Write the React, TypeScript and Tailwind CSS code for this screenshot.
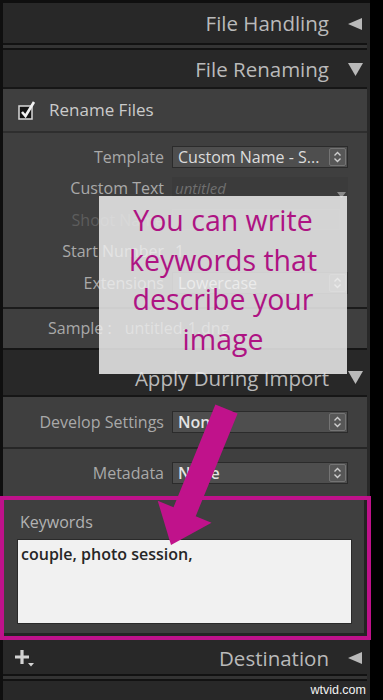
const TriLeft = () => (
  <svg width="15" height="12" viewBox="0 0 15 12" className="ml-[19px]">
    <polygon points="14,0 14,12 0,6" fill="#b9b9b9" />
  </svg>
);

const TriDown = () => (
  <svg width="15" height="13" viewBox="0 0 15 13" className="ml-[19px]">
    <polygon points="0,0 15,0 7.5,13" fill="#b9b9b9" />
  </svg>
);

const Stepper = () => (
  <div className="mr-[1px] flex h-[18px] w-[17px] items-center justify-center rounded-[2px] border border-[#747474] bg-[#575757]">
    <svg width="9" height="12" viewBox="0 0 9 12">
      <polyline points="1.5,4.5 4.5,1.5 7.5,4.5" fill="none" stroke="#cfcfcf" strokeWidth="1.4" />
      <polyline points="1.5,7.5 4.5,10.5 7.5,7.5" fill="none" stroke="#cfcfcf" strokeWidth="1.4" />
    </svg>
  </div>
);

const Select = ({ value, bold }: { value: string; bold?: boolean }) => (
  <div className="flex h-[22px] w-[176px] items-center border border-[#2b2b2b] bg-[#4e4e4e]">
    <span
      className={
        bold
          ? "flex-1 truncate pl-[5px] text-[16px] font-semibold leading-[20px] text-[#e4e4e4]"
          : "flex-1 truncate pl-[5px] text-[16px] leading-[20px] text-[#dcdcdc]"
      }
    >
      {value}
    </span>
    <Stepper />
  </div>
);

const Row = ({ label, children, faded }: { label: string; children?: any; faded?: boolean }) => (
  <div className="flex h-[31.5px] items-center">
    <div
      className={
        faded
          ? "w-[161px] text-right text-[16px] text-[#5d5d5d]"
          : "w-[161px] text-right text-[16px] text-[#a9a9a9]"
      }
    >
      {label}
    </div>
    <div className="ml-[8px] flex items-center">{children}</div>
  </div>
);

const DoubleLine = () => (
  <div className="mr-[3px] h-[7px] border-y-2 border-[#121212] bg-[#343434]" />
);

const App = () => {
  return (
    <div
      className="relative flex h-[700px] w-[383px] overflow-hidden bg-black"
      style={{ fontFamily: '"Open Sans", "Liberation Sans", sans-serif' }}
    >
      <div className="flex h-full w-[370px] flex-col border-l-[3px] border-t-[3px] border-[#0f0f0f] bg-[#282828]">
        {/* File Handling */}
        <div className="flex h-[40px] items-center justify-end pr-[7px] pt-[2px]">
          <span className="text-[20.5px] text-[#bababa]">File Handling</span>
          <TriLeft />
        </div>
        <DoubleLine />

        {/* File Renaming */}
        <div className="flex h-[38px] items-center justify-end pr-[7px] pt-[3px]">
          <span className="text-[20.5px] text-[#bababa]">File Renaming</span>
          <TriDown />
        </div>

        <div className="mr-[3px] flex flex-col border-y-2 border-[#161616] bg-[#3f3f3f]">
          <div className="flex h-[44px] items-center border-b-2 border-[#2e2e2e] pl-[14px]">
            <svg width="22" height="22" viewBox="0 0 22 22">
              <rect x="2" y="7" width="13" height="13" fill="#141414" stroke="#d8d8d8" strokeWidth="1.5" />
              <polyline points="5,13 8.5,17 17,3" fill="none" stroke="#f2f2f2" strokeWidth="2.6" />
            </svg>
            <span className="ml-[10px] text-[17px] text-[#cbcbcb]">Rename Files</span>
          </div>

          <div className="flex flex-col pb-[8px] pt-[8px]">
            <Row label="Template">
              <Select value="Custom Name - S..." />
            </Row>
            <Row label="Custom Text">
              <div className="relative flex h-[22px] w-[176px] items-center bg-[#3b3b3b]">
                <span className="pl-[3px] text-[15px] italic text-[#6f6f6f]">untitled</span>
                <svg width="9" height="6" viewBox="0 0 9 6" className="absolute right-[2px] top-[15px]">
                  <polygon points="0,0 9,0 4.5,6" fill="#8a8a8a" />
                </svg>
              </div>
            </Row>
            <Row label="Shoot Name" faded>
              <div className="h-[21px] w-[168px] border border-[#4d4d4d] bg-[#424242]" />
            </Row>
            <Row label="Start Number">
              <span className="pl-[3px] text-[16px] text-[#a9a9a9]">1</span>
            </Row>
            <Row label="Extensions">
              <Select value="Lowercase" />
            </Row>
          </div>

          <div className="flex h-[41px] items-center border-t-2 border-[#1b1b1b] pl-[45px]">
            <span className="text-[16px] text-[#a9a9a9]">Sample :</span>
            <span className="ml-[13px] text-[16px] text-[#9a9a9a]">untitled-1.dng</span>
          </div>
        </div>

        {/* Apply During Import */}
        <div className="flex h-[46px] items-center justify-end pr-[7px] pt-[11px]">
          <span className="text-[20.5px] text-[#bababa]">Apply During Import</span>
          <TriDown />
        </div>

        <div className="mr-[3px] flex flex-col border-t-2 border-[#161616] bg-[#3f3f3f]">
          <div className="border-b-2 border-[#262626]">
            <div className="flex h-[50px] items-center">
              <div className="w-[161px] text-right text-[16px] text-[#a9a9a9]">Develop Settings</div>
              <div className="ml-[8px]">
                <Select value="None" bold />
              </div>
            </div>
          </div>
          <div className="flex h-[47px] items-center">
            <div className="w-[161px] text-right text-[16px] text-[#a9a9a9]">Metadata</div>
            <div className="ml-[8px]">
              <Select value="None" bold />
            </div>
          </div>
        </div>

        {/* Keywords, outlined */}
        <div className="relative -ml-[3px] h-[144px] w-[371px] shrink-0 border-[4px] border-[#bf128b] bg-[#3f3f3f]">
          <div className="flex h-full flex-col border-b-[3px] border-r-[3px] border-[#242424]">
            <div className="pl-[16px] pt-[11px] text-[16px] leading-[22px] text-[#b3b3b3]">Keywords</div>
            <div className="ml-[13px] mt-[6px] h-[85px] w-[335px] border border-[#2a2a2a] bg-[#f1f1f1] px-[3px] pt-[2px]">
              <span className="text-[16px] font-semibold text-[#262626]">couple, photo session,</span>
            </div>
          </div>
        </div>

        {/* Destination */}
        <div className="flex h-[34px] shrink-0 items-center pr-[7px] pt-[2px]">
          <div className="relative ml-[10px] h-[20px] w-[22px]">
            <svg width="22" height="20" viewBox="0 0 22 20">
              <path d="M9 2 V16 M2 9 H16" stroke="#d4d4d4" strokeWidth="3.2" />
              <polygon points="15,15 21,15 18,18.5" fill="#d4d4d4" />
            </svg>
          </div>
          <div className="flex-1" />
          <span className="text-[20.5px] text-[#bababa]">Destination</span>
          <TriLeft />
        </div>
        <DoubleLine />
        <div className="flex flex-1 items-center justify-end pr-[4px]">
          <span
            className="text-[12.5px] text-[#f2f2f2]"
            style={{ fontFamily: '"Liberation Sans", Arial, sans-serif' }}
          >
            wtvid.com
          </span>
        </div>
      </div>

      {/* annotation box */}
      <div className="absolute left-[99px] top-[196px] h-[178px] w-[248px] bg-[#ededed]/85 pt-[5px] text-center text-[28.5px] leading-[39.5px] text-[#ae1383]">
        You can write
        <br />
        keywords that
        <br />
        describe your
        <br />
        image
      </div>

      {/* arrow */}
      <svg className="pointer-events-none absolute left-0 top-0" width="383" height="700" viewBox="0 0 383 700">
        <polygon
          points="215.4,404.5 237.6,413.5 195.7,516.2 211.5,522.7 171,545 157.7,500.7 173.5,507.2"
          fill="#c0128b"
        />
      </svg>
    </div>
  );
};

export default App;
